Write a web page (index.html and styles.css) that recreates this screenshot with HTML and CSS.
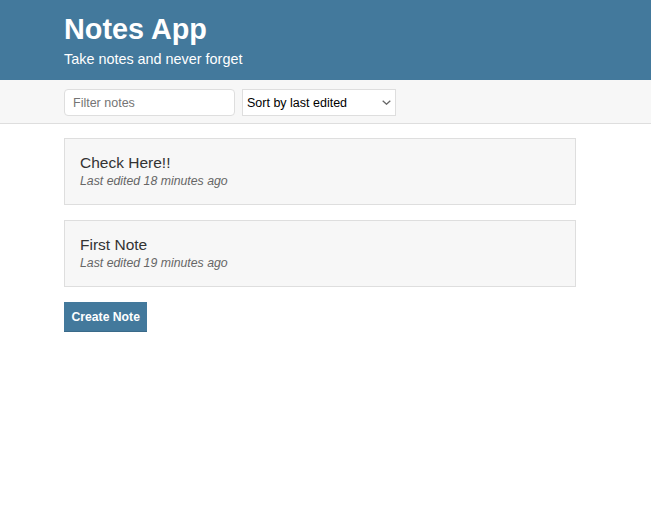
FILE: index.html
```html
<!DOCTYPE html>
<html lang="en">
<head>
<meta charset="utf-8">
<title>Notes App</title>
<link rel="stylesheet" href="styles.css">
</head>
<body>
<header class="header">
  <div class="container">
    <h1 class="header-title">Notes App</h1>
    <p class="header-subtitle">Take notes and never forget</p>
  </div>
</header>
<div class="actions">
  <div class="container actions-row">
    <input class="input" type="text" placeholder="Filter notes">
    <div class="select-wrap">
      <select class="dropdown">
        <option>Sort by last edited</option>
        <option>Sort by recently created</option>
        <option>Sort alphabetically</option>
      </select>
      <svg class="chevron" width="9" height="5" viewBox="0 0 9 5"><path d="M0.7 0.7 L4.5 4.2 L8.3 0.7" fill="none" stroke="#666" stroke-width="1.3"/></svg>
    </div>
  </div>
</div>
<main class="container notes">
  <a class="note" href="#">
    <p class="note-title">Check Here!!</p>
    <p class="note-subtitle">Last edited 18 minutes ago</p>
  </a>
  <a class="note" href="#">
    <p class="note-title">First Note</p>
    <p class="note-subtitle">Last edited 19 minutes ago</p>
  </a>
  <button class="button">Create Note</button>
</main>
</body>
</html>
```

FILE: styles.css
```css
* { box-sizing: border-box; }

body {
  margin: 0;
  font-family: "Liberation Sans", Arial, sans-serif;
  color: #333333;
  background: #ffffff;
}

.container {
  width: 640px;
  padding: 0 64px;
}

.header {
  background: #43799c;
  color: #ffffff;
  height: 80px;
  padding-top: 12px;
}

.header-title {
  margin: 0;
  font-size: 28.8px;
  line-height: 1.2;
  font-weight: bold;
}

.header-subtitle {
  margin: 4.3px 0 0;
  font-size: 14.4px;
  line-height: 1.2;
  font-weight: 300;
}

.actions {
  background: #f7f7f7;
  border-bottom: 1px solid #dedede;
  height: 44px;
  padding-top: 9px;
}

.actions-row {
  display: flex;
  gap: 7px;
}

.input {
  width: 171px;
  height: 27px;
  border: 1px solid #dedede;
  border-radius: 4px;
  padding: 0 8px;
  font-family: "Liberation Sans", Arial, sans-serif;
  font-size: 12.5px;
  color: #333;
  background: #ffffff;
  outline: none;
}

.input::placeholder {
  color: #757575;
}

.select-wrap {
  position: relative;
  width: 154px;
  height: 27px;
}

.dropdown {
  appearance: none;
  -webkit-appearance: none;
  width: 100%;
  height: 100%;
  border: 1px solid #dedede;
  border-radius: 0;
  background: #ffffff;
  padding: 0 4px;
  font-family: "Liberation Sans", Arial, sans-serif;
  font-size: 12.5px;
  color: #000000;
  outline: none;
}

.chevron {
  position: absolute;
  right: 5px;
  top: 11px;
  pointer-events: none;
}

.notes {
  padding-top: 14px;
  display: flex;
  flex-direction: column;
  align-items: flex-start;
}

.note {
  display: block;
  width: 512px;
  background: #f7f7f7;
  border: 1px solid #dedede;
  padding: 15.2px 15px 15.2px;
  margin-bottom: 14.8px;
  text-decoration: none;
  color: #333333;
}

.note-title {
  margin: 0 0 1.3px;
  font-size: 15.5px;
  line-height: 1.2;
}

.note-subtitle {
  margin: 0;
  font-size: 12.3px;
  line-height: 1.2;
  font-style: italic;
  color: #666666;
}

.button {
  margin-top: 0.5px;
  background: #43799c;
  color: #ffffff;
  border: none;
  border-bottom: 1px solid #3a6a89;
  height: 30px;
  padding: 0 7.5px;
  font-family: "Liberation Sans", Arial, sans-serif;
  font-size: 12.2px;
  font-weight: bold;
  cursor: pointer;
}
```
